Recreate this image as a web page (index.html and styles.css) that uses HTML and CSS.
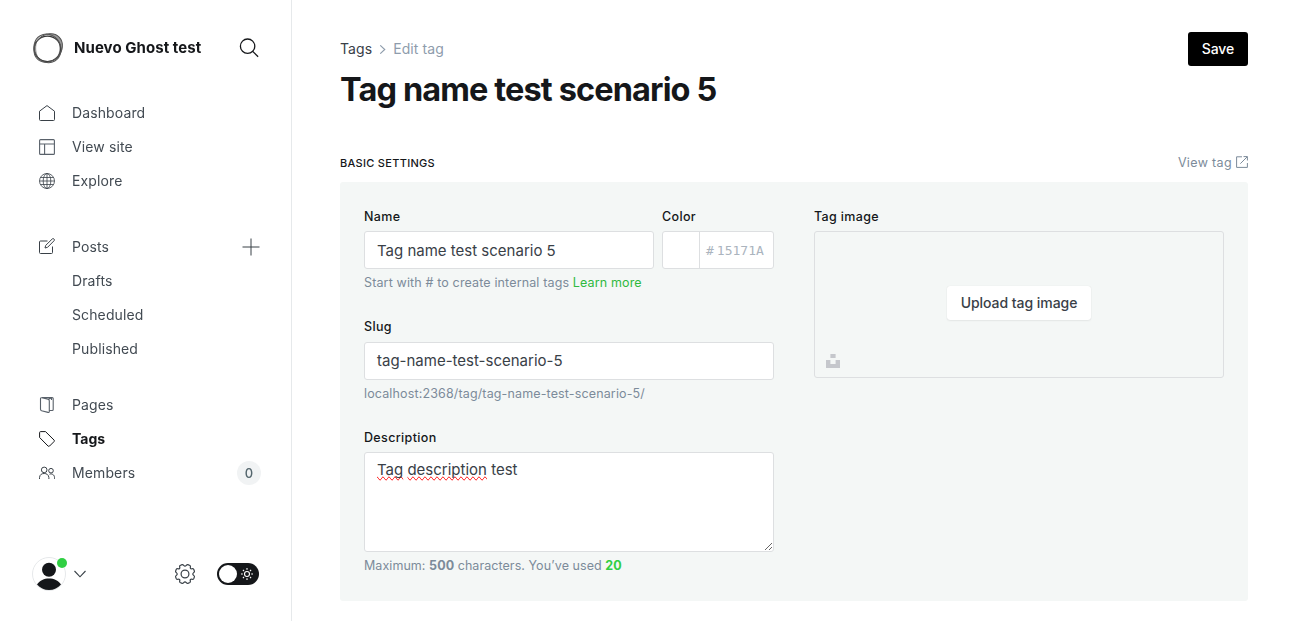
FILE: index.html
```html
<!DOCTYPE html>
<html lang="es">
<head>
<meta charset="utf-8">
<title>Tags - Nuevo Ghost test</title>
<link rel="stylesheet" href="styles.css">
</head>
<body>
<div class="app">
  <nav class="sidebar">
    <header class="site">
      <svg class="site-logo" viewBox="0 0 32 32" fill="none">
        <path d="M14 3C17 .5 24 1 27.500 5C31.500 9 31.500 17 28.500 22C27.500 24.500 26 26 24.500 26.500C28.500 20 28.500 11 24 6.500C21 4 18 3.200 14 3Z" fill="#999"/>
        <path d="M3.500 9C0 16 2 25 9 29C4.500 24 3 17 5 10Z" fill="#999"/>
        <ellipse cx="15.400" cy="16.800" rx="13.300" ry="12.700" stroke="#333" stroke-width="1.200"/>
        <ellipse cx="16.200" cy="16" rx="15.400" ry="12.900" transform="rotate(-45 16.200 16)" stroke="#555" stroke-width="1"/>
        <ellipse cx="15.500" cy="16.400" rx="14.600" ry="13.200" transform="rotate(60 15.500 16.400)" stroke="#555" stroke-width="1"/>
      </svg>
      <span class="site-name">Nuevo Ghost test</span>
      <svg class="search" viewBox="0 0 20 20" fill="none" stroke="#15171a" stroke-width="1.300"><circle cx="8.600" cy="8.200" r="7.200"/><path d="M13.700 13.400L19.100 18.800"/></svg>
    </header>
    <ul class="menu">
      <li class="item"><svg class="icon" viewBox="0 0 16 16"><path d="M.5 6.200L8 .6L15.500 6.200V14.500Q15.500 15.500 14.500 15.500H1.500Q.5 15.500 .5 14.500Z"/></svg><span class="text">Dashboard</span></li>
      <li class="item"><svg class="icon soft" viewBox="0 0 16 16"><rect x=".6" y=".6" width="14.800" height="14.800" rx="1"/><path d="M.5 5H15.500M5.600 5V15.500"/></svg><span class="text">View site</span></li>
      <li class="item"><svg class="icon thin" viewBox="0 0 16 16"><circle cx="8" cy="8" r="7.500"/><ellipse cx="8" cy="8" rx="3.800" ry="7.500"/><path d="M8 .5V15.500M.5 8H15.500M1.600 4.500H14.400M1.600 11.500H14.400"/></svg><span class="text">Explore</span></li>
    </ul>
    <ul class="menu">
      <li class="item"><svg class="icon pen" viewBox="0 0 16 16"><path d="M8.500 3H1.500Q.5 3 .5 4V14.500Q.5 15.500 1.500 15.500H12.500Q13.500 15.500 13.500 14.500V8.500M6 10L6.700 7.400L13.300 .9Q14.200 .2 15 1Q15.800 1.800 15.100 2.700L8.600 9.300Z"/></svg><span class="text">Posts</span><svg class="plus" viewBox="0 0 18 18"><path d="M9 .5V17.500M.5 9H17.500"/></svg></li>
      <li class="item sub"><span class="text">Drafts</span></li>
      <li class="item sub"><span class="text">Scheduled</span></li>
      <li class="item sub"><span class="text">Published</span></li>
    </ul>
    <ul class="menu">
      <li class="item"><svg class="icon soft" viewBox="0 0 16 16"><path d="M1.500 1.800Q1.500 .5 2.800 .8L9 2.200Q10.300 2.600 10.300 3.800V14.500Q10.300 15.800 9 15.400L2.600 13.700Q1.500 13.300 1.500 12.200ZM3 .6H13.200Q14.200 .6 14.200 1.600V12.500Q14.200 13.500 13.200 13.500H10.300M9.500 2.300L11.500 1.200Q12.500 1 12.500 2V3"/></svg><span class="text">Pages</span></li>
      <li class="item active"><svg class="icon" viewBox="0 0 16 16"><path d="M.6 1.600Q.6 .6 1.600 .6H6.500L15 9Q15.800 9.800 15 10.600L10.600 15Q9.800 15.800 9 15L.6 6.500Z"/></svg><span class="text">Tags</span></li>
      <li class="item"><svg class="icon" viewBox="0 0 16 16"><circle cx="5.200" cy="4.900" r="2.800"/><circle cx="12" cy="5.700" r="2.300"/><path d="M.5 14V12.600C.8 9.300 3 8.500 5.200 8.500C7.500 8.500 9.700 9.700 9.900 12.600V14M10.500 9.200C13 8.300 15.500 9.800 15.500 12.500V13.800"/></svg><span class="text">Members</span><span class="count">0</span></li>
    </ul>
    <footer class="account">
      <span class="avatar">
        <svg viewBox="0 0 34 34"><circle cx="17" cy="17" r="16.500" fill="#fff" stroke="#e6e8ea"/><circle cx="17" cy="12.700" r="7" fill="#15171a"/><path d="M5 27.500C8 23.300 12 21.500 17 21.500S26 23.300 29 27.500C26 31 22 33 17 33S8 31 5 27.500Z" fill="#15171a"/></svg>
        <span class="dot"></span>
      </span>
      <svg class="chevron" viewBox="0 0 12 8"><path d="M.5 1L6 6.800L11.500 1"/></svg>
      <svg class="gear" viewBox="-10 -10 20 20"><circle r="3.900"/><path d="M0 -7.800C1.400 -7.800 1.300 -9.600 2.900 -9.300L4.900 -8.500C6.200 -7.700 4.800 -6.500 5.500 -5.500S7.900 -6.100 8.700 -4.700L9.400 -2.900C9.700 -1.400 7.800 -1.400 7.800 0S9.700 1.400 9.400 2.900L8.700 4.700C7.900 6.100 6.500 4.500 5.500 5.500S6.200 7.700 4.900 8.500L2.900 9.300C1.300 9.600 1.400 7.800 0 7.800S-1.300 9.600 -2.900 9.300L-4.900 8.500C-6.200 7.700 -4.500 6.500 -5.500 5.500S-7.900 6.100 -8.700 4.700L-9.400 2.900C-9.700 1.400 -7.800 1.400 -7.800 0S-9.700 -1.400 -9.400 -2.900L-8.700 -4.700C-7.900 -6.100 -6.500 -4.500 -5.500 -5.500S-6.200 -7.700 -4.900 -8.500L-2.900 -9.300C-1.300 -9.600 -1.400 -7.800 0 -7.800Z"/></svg>
      <span class="switch"><span class="knob"></span><svg class="sun" viewBox="-6 -6 12 12"><circle r="2.500"/><path d="M0 -6V-4.200M0 4.200V6M-6 0H-4.200M4.200 0H6M-4.100 -4.100L-3 -3M3 3L4.100 4.100M-4.100 4.100L-3 3M3 -3L4.100 -4.100"/></svg></span>
    </footer>
  </nav>
  <main class="main">
    <header class="page-head">
      <div>
        <div class="crumbs"><span class="crumb">Tags</span><svg class="sep" viewBox="0 0 6 8"><path d="M1 .3L5 4L1 7.700"/></svg><span>Edit tag</span></div>
        <h1 class="title">Tag name test scenario 5</h1>
      </div>
      <button class="save">Save</button>
    </header>
    <div class="section-head">
      <h2 class="section-title">Basic settings</h2>
      <a class="view-tag">View tag<svg viewBox="0 0 12 12"><path d="M6 .8H.6V11.400H11.400V7M7.500 .6H11.400V4.500M11.200 .8L4.300 7.700"/></svg></a>
    </div>
    <section class="panel">
      <div class="column">
        <div class="pair">
          <div class="field name-field">
            <label class="label">Name</label>
            <div class="input">Tag name test scenario 5</div>
          </div>
          <div class="field color-field">
            <label class="label">Color</label>
            <div class="input color"><span class="swatch"></span><span class="hash">#</span><span class="hex">15171A</span></div>
          </div>
        </div>
        <p class="hint">Start with # to create internal tags <a class="learn">Learn more</a></p>
        <div class="field slug">
          <label class="label">Slug</label>
          <div class="input">tag-name-test-scenario-5</div>
          <p class="hint">localhost:2368/tag/tag-name-test-scenario-5/</p>
        </div>
        <div class="field description">
          <label class="label">Description</label>
          <div class="textarea"><span class="misspelt">Tag</span> <span class="misspelt">description</span> test</div>
          <p class="hint counter">Maximum: <b>500</b> characters. You’ve used <b class="used">20</b></p>
        </div>
      </div>
      <div class="column">
        <label class="label">Tag image</label>
        <div class="dropzone">
          <button class="upload">Upload tag image</button>
          <svg class="unsplash" viewBox="0 0 14 14"><path d="M4.400 0H9.600V4H4.400ZM0 6H4.400V10H9.600V6H14V14H0Z"/></svg>
        </div>
      </div>
    </section>
  </main>
</div>
</body>
</html>
```
FILE: styles.css
```css
* { box-sizing: border-box; }
body { margin: 0; background: #fff; color: #15171a; font-family: Inter, "Open Sans", sans-serif; font-size: 15px; }
h1, h2, p, ul { margin: 0; padding: 0; }
button { border: 0; font-family: inherit; }
svg { display: block; flex: none; }

.app { display: flex; height: 621px; overflow: hidden; }
.sidebar { display: flex; flex-direction: column; width: 292px; flex: none; border-right: 1px solid #e6e9eb; will-change: transform; }

.site { display: flex; align-items: center; height: 32px; margin: 32px 32px 32px 32px; }
.site-logo { width: 32px; height: 32px; }
.site-name { flex: 1; margin-left: 10px; font-size: 15px; font-weight: 700; line-height: 20px; letter-spacing: .06px; }
.search { width: 20px; height: 20px; }

.menu { list-style: none; margin-bottom: 32px; }
.menu + .menu + .menu { margin-top: -10px; }
.item { display: flex; align-items: center; height: 34px; padding: 0 31px 0 39px; color: #424a52; font-size: 14px; letter-spacing: .12px; }
.text { line-height: 20px; }
.icon { width: 16px; height: 16px; margin: 0 17px 0 0; fill: none; stroke: #394047; stroke-width: 1; }
.icon.thin { stroke-width: .8; }
.icon.soft { stroke: #59616a; stroke-width: 1.100; }
.icon.pen { margin-top: -2px; }
.sub { padding-left: 72px; }
.plus { width: 18px; height: 18px; margin-left: auto; stroke: #394047; stroke-width: 1; }
.active { color: #15171a; font-weight: 700; letter-spacing: 0; }
.active .icon { stroke: #15171a; }
.count { margin: 0 -1px 0 auto; width: 24px; height: 24px; border-radius: 12px; background: #f1f3f4; color: #54666d; font-size: 13px; font-weight: 500; line-height: 24px; text-align: center; }

.account { display: flex; align-items: center; height: 34px; margin: 35px 32px 0 32px; }
.avatar { position: relative; width: 34px; height: 34px; }
.dot { position: absolute; top: 1px; left: 25px; width: 10px; height: 10px; border-radius: 50%; background: #30cf43; }
.chevron { width: 12px; height: 8px; margin-left: 8px; fill: none; stroke: #394047; stroke-width: 1.100; }
.gear { width: 20px; height: 20px; margin-left: auto; fill: none; stroke: #394047; stroke-width: 1.200; }
.switch { display: flex; align-items: center; width: 42px; height: 22px; margin-left: 22px; padding: 0 6px 0 2px; border-radius: 11px; background: #15171a; justify-content: space-between; }
.knob { width: 18px; height: 18px; border-radius: 50%; background: #fff; }
.sun { width: 12px; height: 12px; fill: none; stroke: #fff; stroke-width: 1.100; }

.main { flex: 1; padding: 32px 48px 0; }
.page-head { display: flex; justify-content: space-between; align-items: flex-start; height: 121px; }
.crumbs { display: flex; align-items: center; height: 34px; color: #8e9cac; font-size: 14px; line-height: 20px; letter-spacing: .08px; }
.crumb { color: #394047; }
.sep { width: 7px; height: 9px; margin: 1px 7px 0 7px; fill: none; stroke: #8e9cac; stroke-width: 1; }
.title { font-size: 32.500px; font-weight: 700; line-height: 48px; letter-spacing: -.880px; }
.save { width: 60px; height: 34px; border-radius: 3px; background: #000; color: #fff; font-size: 14px; font-weight: 500; line-height: 20px; letter-spacing: -.1px; padding: 0; }

.section-head { display: flex; justify-content: space-between; align-items: center; height: 20px; margin-bottom: 9px; }
.section-title { font-size: 11px; font-weight: 500; line-height: 20px; text-transform: uppercase; letter-spacing: .3px; }
.view-tag { display: flex; align-items: center; gap: 4px; color: #7c8b9a; font-size: 12.500px; line-height: 20px; letter-spacing: .35px; }
.view-tag svg { width: 12px; height: 12px; margin-top: -2px; fill: none; stroke: #7c8b9a; stroke-width: 1; }

.panel { display: grid; grid-template-columns: 410px 410px; gap: 40px; height: 419px; padding: 25px 24px; border-radius: 3px; background: #f4f7f6; }
.label { display: block; height: 24px; font-size: 12.500px; font-weight: 500; line-height: 19px; letter-spacing: .35px; }
.pair { display: flex; gap: 8px; }
.name-field { width: 290px; }
.color-field { width: 112px; }
.input { height: 38px; padding: 0 12px; border: 1px solid #dddfe1; border-radius: 3px; background: #fff; color: #394047; font-size: 15px; line-height: 37px; }
.color { display: flex; align-items: center; padding: 0; color: #abb4be; }
.swatch { width: 37px; height: 36px; border-right: 1px solid #dddfe1; }
.hash { margin: 0 3px 0 6px; font: 13px "DejaVu Sans Mono", monospace; }
.hex { font: 13px "DejaVu Sans Mono", monospace; }
.hint { margin-top: 4px; color: #7c8b9a; font-size: 12.500px; line-height: 20px; letter-spacing: .14px; }
.counter { letter-spacing: .06px; }
.learn { color: #30b93f; }
.slug { margin-top: 24px; }
.slug .label { height: 25px; }
.slug .input { line-height: 35px; }
.description { margin-top: 24px; }
.textarea { height: 100px; padding: 7px 12px; border: 1px solid #dddfe1; border-radius: 3px; background: #fff; color: #394047; font-size: 15px; line-height: 20px; overflow: auto; resize: vertical; }
.misspelt { text-decoration-line: spelling-error; }
.used { color: #30cf43; }

.dropzone { position: relative; display: flex; align-items: center; justify-content: center; height: 147px; padding-bottom: 4px; border: 1px solid #dddfe1; border-radius: 3px; }
.upload { width: 144px; height: 34px; padding: 0; border-radius: 3px; background: #fff; box-shadow: 0 0 1px rgba(0,0,0,.12), 0 1px 2px rgba(0,0,0,.06); color: #394047; font-size: 14px; font-weight: 500; line-height: 20px; letter-spacing: -.05px; }
.unsplash { position: absolute; left: 11px; bottom: 9px; width: 14px; height: 14px; fill: #c5c7cc; }
```
